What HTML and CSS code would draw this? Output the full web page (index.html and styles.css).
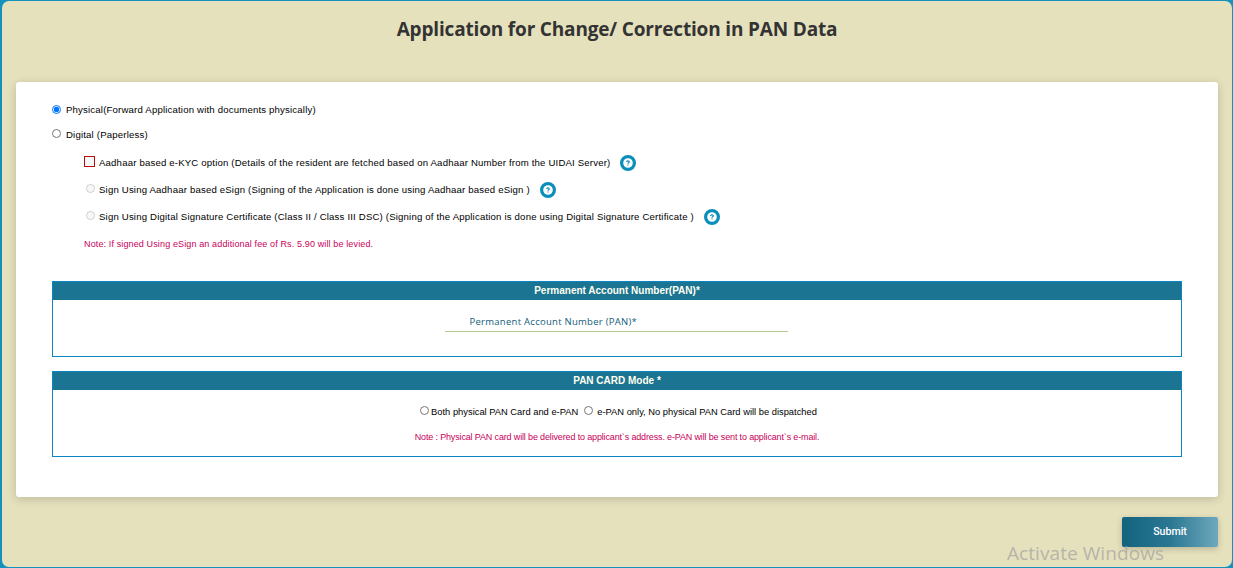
FILE: index.html
```html
<!DOCTYPE html>
<html lang="en">
<head>
    <meta charset="UTF-8">
    <meta name="viewport" content="width=device-width, initial-scale=1.0">
    <title>Application for Change/ Correction in PAN Data</title>
    <link rel="stylesheet" href="styles.css">
</head>
<body>
    <form class="page">
        <h1 class="title">Application for Change/ Correction in PAN Data</h1>

        <div class="card">
            <div class="options">
                <label class="option"><input type="radio" name="mode" class="physical" checked><span class="text">Physical(Forward Application with documents physically)</span></label>
                <label class="option"><input type="radio" name="mode"><span class="text">Digital (Paperless)</span></label>
            </div>

            <div class="sub-options">
                <label class="option">
                    <input type="checkbox" class="kyc-check">
                    <span class="text">Aadhaar based e-KYC option (Details of the resident are fetched based on Aadhaar Number from the UIDAI Server)</span>
                    <svg class="help" viewBox="0 0 16 16"><circle cx="8" cy="8" r="6.4"/><path d="M6.8 6.9C6.8 5.4 9.4 5.5 9.2 6.9C9.1 7.8 8 7.7 8 8.7M8 9.6V10.6"/></svg>
                </label>
                <label class="option">
                    <input type="radio" name="sign" disabled>
                    <span class="text">Sign Using Aadhaar based eSign (Signing of the Application is done using Aadhaar based eSign )</span>
                    <svg class="help" viewBox="0 0 16 16"><circle cx="8" cy="8" r="6.4"/><path d="M6.8 6.9C6.8 5.4 9.4 5.5 9.2 6.9C9.1 7.8 8 7.7 8 8.7M8 9.6V10.6"/></svg>
                </label>
                <label class="option">
                    <input type="radio" name="sign" disabled>
                    <span class="text">Sign Using Digital Signature Certificate (Class II / Class III DSC) (Signing of the Application is done using Digital Signature Certificate )</span>
                    <svg class="help" viewBox="0 0 16 16"><circle cx="8" cy="8" r="6.4"/><path d="M6.8 6.9C6.8 5.4 9.4 5.5 9.2 6.9C9.1 7.8 8 7.7 8 8.7M8 9.6V10.6"/></svg>
                </label>
                <p class="note">Note: If signed Using eSign an additional fee of Rs. 5.90 will be levied.</p>
            </div>

            <div class="panel pan-panel">
                <h2 class="panel-title">Permanent Account Number(PAN)*</h2>
                <input type="text" class="pan-input" placeholder="Permanent Account Number (PAN)*">
            </div>

            <div class="panel mode-panel">
                <h2 class="panel-title">PAN CARD Mode *</h2>
                <div class="mode-row">
                    <label><input type="radio" name="card"><span>Both physical PAN Card and e-PAN</span></label>
                    <label><input type="radio" name="card"><span class="epan">e-PAN only, No physical PAN Card will be dispatched</span></label>
                </div>
                <p class="note">Note : Physical PAN card will be delivered to applicant`s address. e-PAN will be sent to applicant`s e-mail.</p>
            </div>
        </div>

        <div class="actions">
            <button type="button" class="submit">Submit</button>
        </div>
    </form>
    <div class="watermark">Activate Windows</div>
</body>
</html>
```
FILE: styles.css
```css
* {
    box-sizing: border-box;
}

body {
    margin: 0;
    height: 568px;
    padding: 1px 1px 1px 2px;
    overflow: hidden;
    background: #1492bb;
    font-family: "Liberation Sans", Arial, sans-serif;
    font-size: 10px;
    color: #000;
}

.page {
    height: 566px;
    padding: 0 14px;
    border-radius: 7px;
    background: #e5e1bd;
}

.title {
    margin: 0;
    height: 81px;
    padding-top: 14px;
    font: bold 19px/28px "Open Sans", sans-serif;
    letter-spacing: -0.17px;
    text-align: center;
    color: #333;
}

.card {
    height: 415px;
    padding: 15px 36px 0;
    border-radius: 3px;
    background: #fff;
    box-shadow: 0 2px 10px rgba(0, 0, 0, 0.18);
}

input[type="radio"] {
    width: 9px;
    height: 9px;
    margin: 0 0 2px;
}

input[type="radio"].physical {
    margin-bottom: 0;
}

.option {
    display: flex;
    align-items: center;
    height: 25px;
    white-space: nowrap;
}

.option .text {
    margin-left: 5px;
    font-size: 9.6px;
    letter-spacing: 0.18px;
}

.sub-options {
    padding: 2px 0 0 32px;
}

.sub-options .option {
    height: 27px;
}

.sub-options input[type="radio"] {
    margin-left: 2px;
}

.sub-options .text {
    margin-left: 4px;
}

.kyc-check {
    appearance: none;
    width: 11px;
    height: 11px;
    margin: 0 0 2px;
    border: 1px solid #b90d0d;
    background: #f7f7f7;
}

.help {
    width: 16px;
    height: 16px;
    margin-left: 10px;
    fill: #fff;
    stroke: #0b8fba;
    stroke-width: 3.2;
}

.help path {
    fill: none;
    stroke-width: 1.2;
}

.note {
    margin: 0;
    color: #c9005b;
    font-size: 9px;
}

.sub-options .note {
    height: 27px;
    line-height: 29px;
    letter-spacing: 0.13px;
}

.panel {
    border: 1px solid #0b86c2;
    text-align: center;
}

.panel-title {
    margin: 0;
    height: 18px;
    background: #1b7492;
    color: #fffff0;
    font-size: 10px;
    line-height: 18px;
}

.pan-panel {
    height: 76px;
    margin-top: 24px;
}

.pan-input {
    width: 343px;
    height: 20px;
    margin: 12px 2px 0 0;
    padding: 0 24px 1px 25px;
    border: 0;
    border-bottom: 1px solid #b1cb98;
    outline: none;
    background: none;
    font: 9.5px "Open Sans", sans-serif;
    letter-spacing: 0.27px;
}

.pan-input::placeholder {
    color: #135d7c;
}

.mode-panel {
    height: 86px;
    margin-top: 14px;
}

.mode-row {
    display: flex;
    justify-content: center;
    gap: 6px;
    height: 25px;
    margin-top: 9px;
    padding-left: 3px;
    font-size: 9.36px;
}

.mode-row label {
    display: flex;
    align-items: center;
}

.mode-row span {
    margin-left: 2px;
}

.mode-row .epan {
    margin-left: 4px;
}

.mode-panel .note {
    line-height: 27px;
    letter-spacing: -0.15px;
}

.actions {
    display: flex;
    justify-content: flex-end;
    padding-top: 20px;
}

.submit {
    width: 96px;
    height: 30px;
    padding: 0 0 2px;
    border: 0;
    border-radius: 2px;
    background: linear-gradient(90deg, #13637e, #2a7792 50%, #6ea8bd);
    box-shadow: 0 2px 6px rgba(0, 0, 0, 0.2);
    color: #fff;
    font: 500 10.6px Roboto, sans-serif;
}

/* sits over the button's lower edge */
.watermark {
    position: absolute;
    left: 1007px;
    top: 540px;
    font: 19px/26px "Open Sans", sans-serif;
    letter-spacing: 0.07px;
    color: rgba(160, 160, 160, 0.7);
    white-space: nowrap;
}
```
